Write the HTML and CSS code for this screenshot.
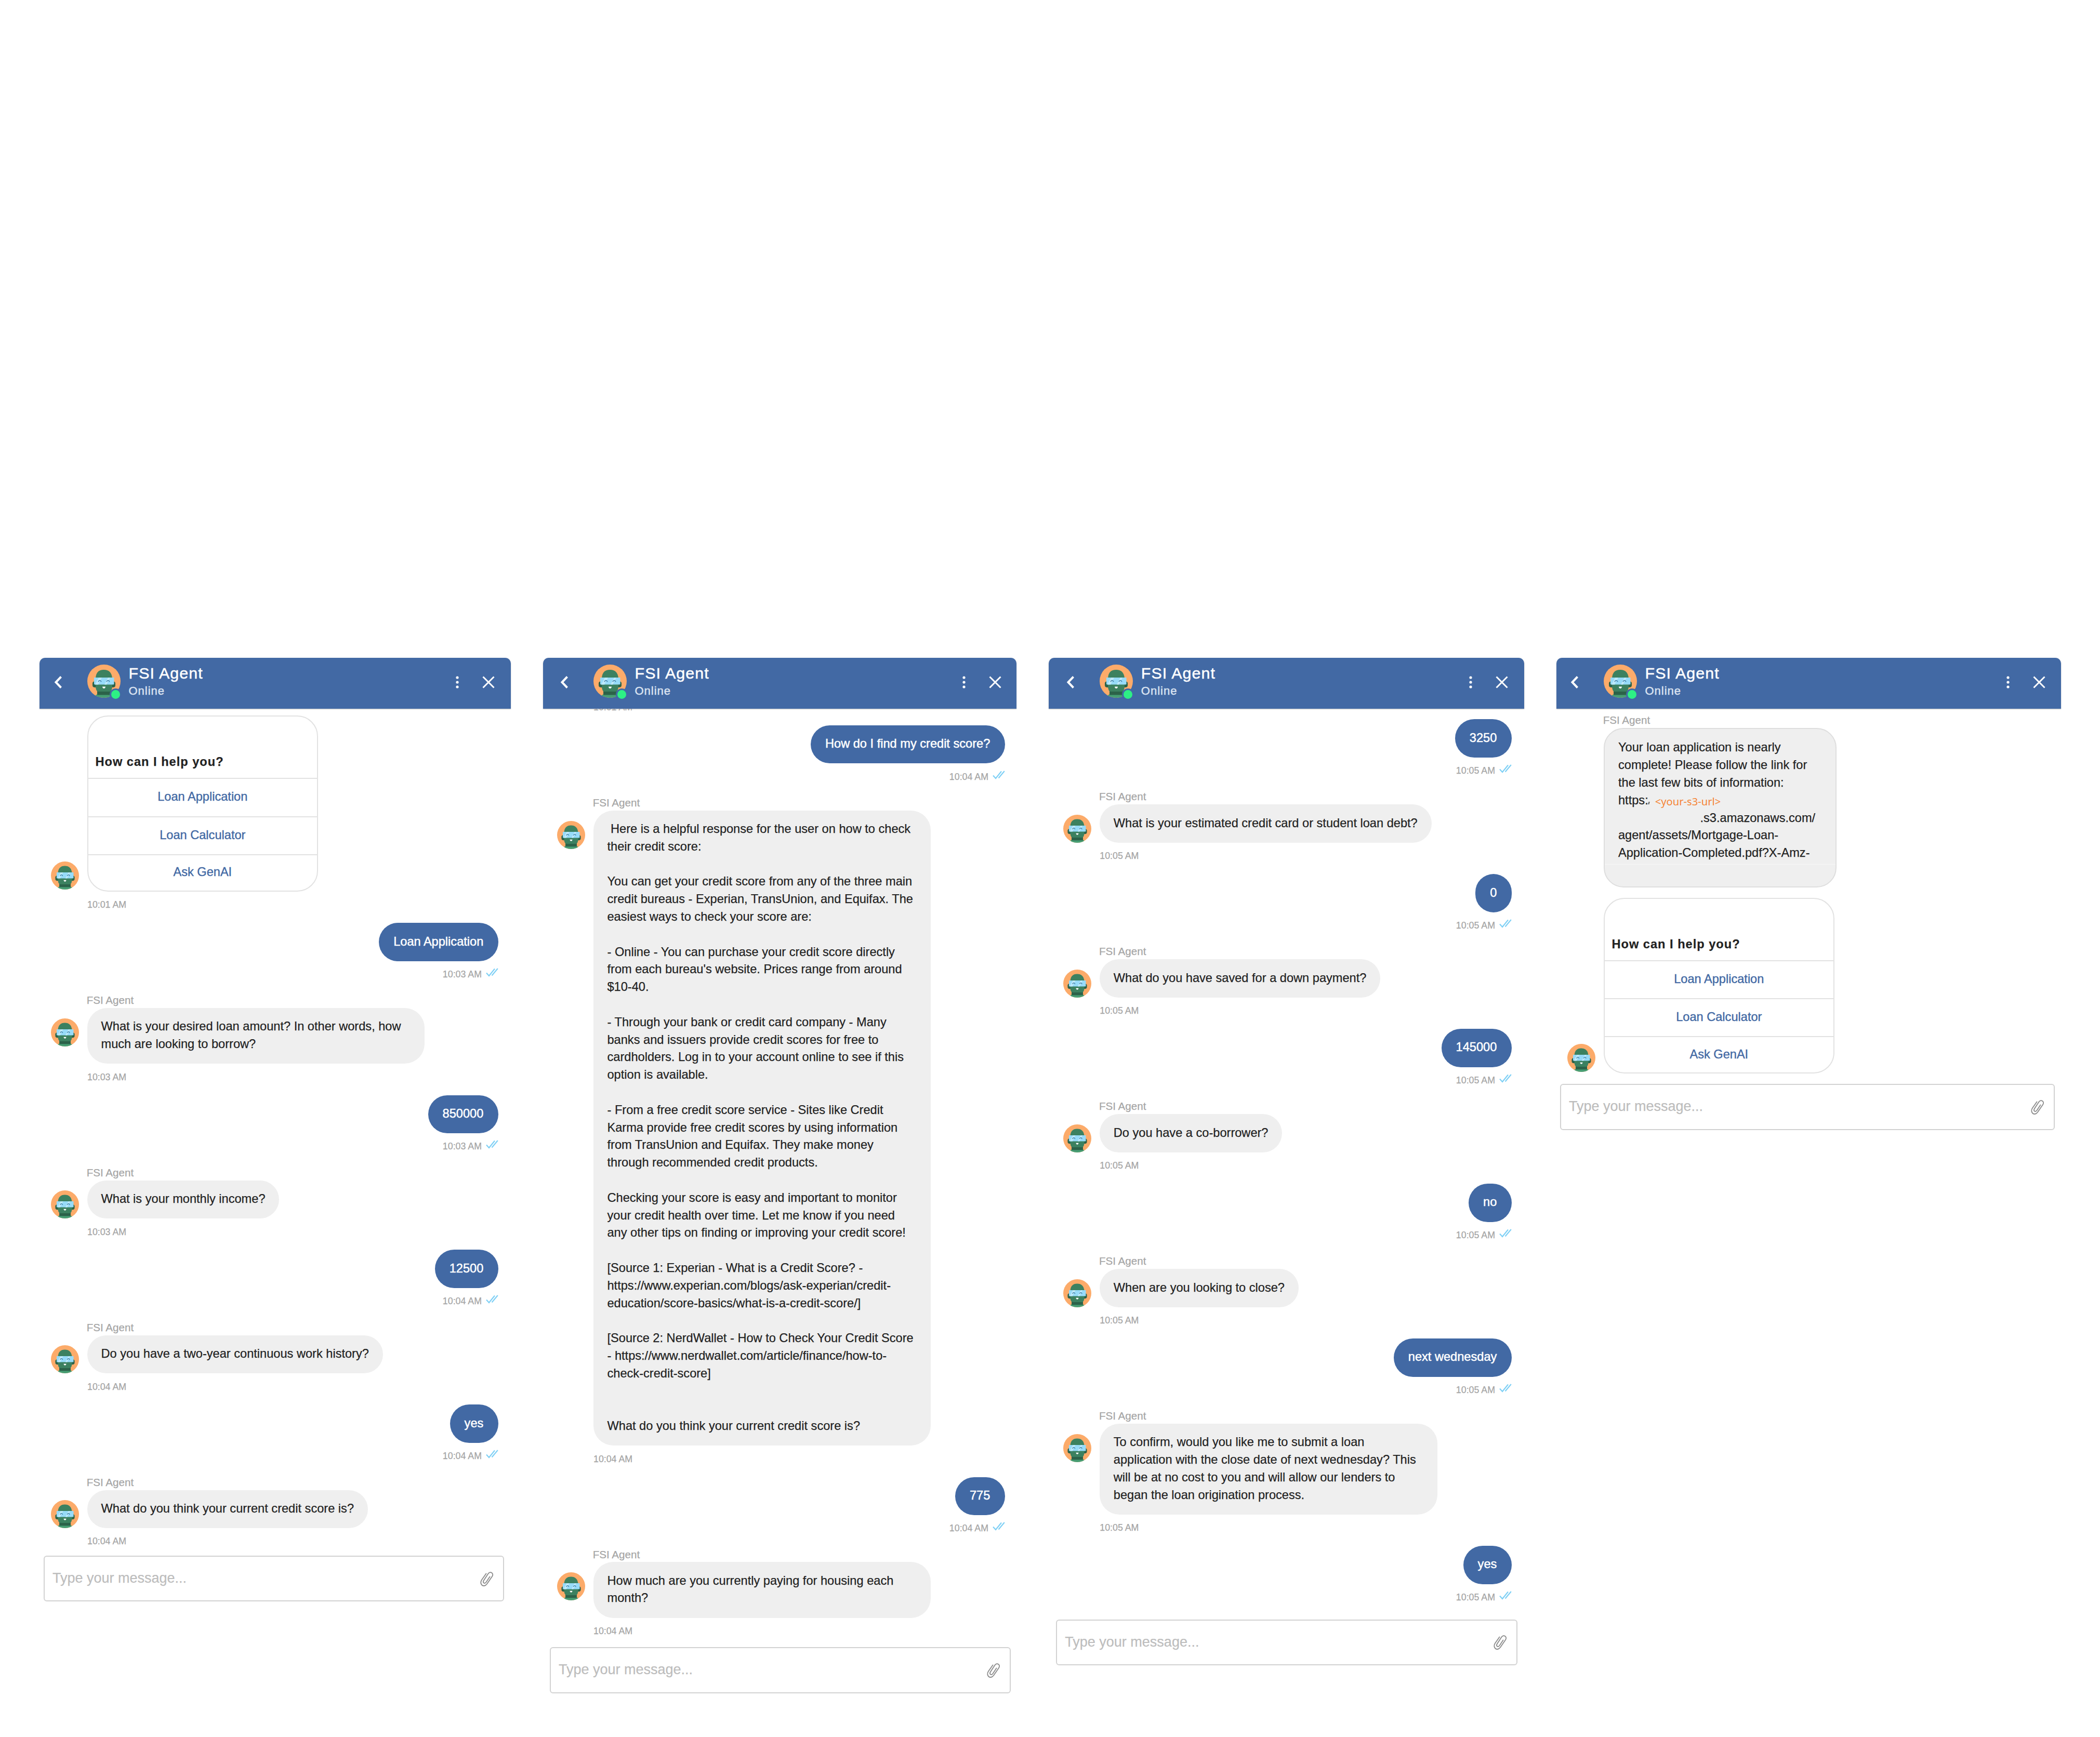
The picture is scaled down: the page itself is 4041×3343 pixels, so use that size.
FILE: index.html
```html
<!DOCTYPE html>
<html lang="en">
<head>
<meta charset="utf-8">
<title>FSI Agent</title>
<link rel="stylesheet" href="styles.css">
</head>
<body>
<svg class="sprite" aria-hidden="true">
  <defs>
    <clipPath id="round"><circle cx="32" cy="32" r="32"/></clipPath>
    <symbol id="avatar" viewBox="0 0 64 64">
      <g clip-path="url(#round)">
        <rect width="64" height="64" fill="#fcab6a"/>
        <path d="M14 64q1-6 6-7h24q5 1 6 7z" fill="#479e74"/>
        <rect x="19" y="48" width="26" height="10.5" fill="#2c6249"/>
        <path d="M10 36q0-3 4-4h36q4 1 4 4v4q0 4-5 4H15q-5 0-5-4z" fill="#2c6249"/>
        <path d="M16 26Q17 10 31.700 10T48 26v17q-1 9-5 9H21q-4 0-5-9z" fill="#3c8160"/>
        <path d="M13 25h38.500v12q0 1.500-1.500 1.500H14.500q-1.500 0-1.500-1.500z" fill="#97dbf9"/>
        <path d="M22 25h6l-7 13.500h-6zM40 25h4l-7 13.500h-4z" fill="#bfe9fb"/>
        <path d="M21 33q3-5 6 0M37 33q3-5 6 0" fill="none" stroke="#3f7fa6" stroke-width="1.500"/>
        <path d="M29 42.500h6q-.5 3.500-3 3.500t-3-3.500z" fill="#fff"/>
      </g>
    </symbol>
    <symbol id="back" viewBox="0 0 16 26"><path d="M13.500 2.500L3.500 13l10 10.500" fill="none" stroke="#fff" stroke-width="4"/></symbol>
    <symbol id="dots" viewBox="0 0 6 24"><circle cx="3" cy="3" r="2.600"/><circle cx="3" cy="12" r="2.600"/><circle cx="3" cy="21" r="2.600"/></symbol>
    <symbol id="close" viewBox="0 0 24 24"><path d="M1.500 1.500l21 21M22.500 1.500l-21 21" fill="none" stroke="#fff" stroke-width="3"/></symbol>
    <symbol id="checks" viewBox="0 0 24 17"><path d="M1 9.500l5 5.500L17 1.500M11.500 14.500L22.800 1" fill="none" stroke="#7fd0f5" stroke-width="2.200"/></symbol>
    <symbol id="clip" viewBox="0 0 28 32"><path d="M12.500 4.500L4 16.500c-5.500 8 3.500 16.500 10 8L24 10c4-6-3.500-11-7.500-5.500L8 17.500c-3 4.500 1.500 7.500 4.500 3.500L19.500 10.500" fill="none" stroke="#8c8c8c" stroke-width="1.900" stroke-linecap="round"/></symbol>
  </defs>
</svg>

<main class="board">

  <section class="panel panel-1">
    <header class="head">
      <svg class="back"><use href="#back"/></svg>
      <div class="face"><svg class="pic"><use href="#avatar"/></svg><i class="online"></i></div>
      <div class="who"><h2 class="name">FSI Agent</h2><p class="status">Online</p></div>
      <svg class="dots"><use href="#dots"/></svg>
      <svg class="close"><use href="#close"/></svg>
    </header>
    <div class="list">
      <div class="msg agent">
        <div class="row"><svg class="avatar"><use href="#avatar"/></svg>
          <div class="card"><h3 class="title">How can I help you?</h3><p class="choice">Loan Application</p><p class="choice">Loan Calculator</p><p class="choice">Ask GenAI</p></div></div>
        <div class="time">10:01 AM</div>
      </div>
      <div class="msg user"><div class="bubble">Loan Application</div><div class="time">10:03 AM<svg class="checks"><use href="#checks"/></svg></div></div>
      <div class="msg agent"><div class="from">FSI Agent</div>
        <div class="row"><svg class="avatar top"><use href="#avatar"/></svg><div class="bubble wide">What is your desired loan amount? In other words, how
much are looking to borrow?</div></div>
        <div class="time">10:03 AM</div></div>
      <div class="msg user"><div class="bubble">850000</div><div class="time">10:03 AM<svg class="checks"><use href="#checks"/></svg></div></div>
      <div class="msg agent"><div class="from">FSI Agent</div>
        <div class="row"><svg class="avatar top"><use href="#avatar"/></svg><div class="bubble">What is your monthly income?</div></div>
        <div class="time">10:03 AM</div></div>
      <div class="msg user"><div class="bubble">12500</div><div class="time">10:04 AM<svg class="checks"><use href="#checks"/></svg></div></div>
      <div class="msg agent"><div class="from">FSI Agent</div>
        <div class="row"><svg class="avatar top"><use href="#avatar"/></svg><div class="bubble">Do you have a two-year continuous work history?</div></div>
        <div class="time">10:04 AM</div></div>
      <div class="msg user"><div class="bubble">yes</div><div class="time">10:04 AM<svg class="checks"><use href="#checks"/></svg></div></div>
      <div class="msg agent"><div class="from">FSI Agent</div>
        <div class="row"><svg class="avatar top"><use href="#avatar"/></svg><div class="bubble">What do you think your current credit score is?</div></div>
        <div class="time">10:04 AM</div></div>
    </div>
    <div class="composer"><span>Type your message...</span><svg class="clip"><use href="#clip"/></svg></div>
  </section>

  <section class="panel panel-2">
    <header class="head">
      <svg class="back"><use href="#back"/></svg>
      <div class="face"><svg class="pic"><use href="#avatar"/></svg><i class="online"></i></div>
      <div class="who"><h2 class="name">FSI Agent</h2><p class="status">Online</p></div>
      <svg class="dots"><use href="#dots"/></svg>
      <svg class="close"><use href="#close"/></svg>
    </header>
    <div class="list">
      <div class="msg agent scrolled"><div class="time">10:01 AM</div></div>
      <div class="msg user"><div class="bubble">How do I find my credit score?</div><div class="time">10:04 AM<svg class="checks"><use href="#checks"/></svg></div></div>
      <div class="msg agent"><div class="from">FSI Agent</div>
        <div class="row"><svg class="avatar top"><use href="#avatar"/></svg><div class="bubble wide"> Here is a helpful response for the user on how to check
their credit score:

You can get your credit score from any of the three main
credit bureaus - Experian, TransUnion, and Equifax. The
easiest ways to check your score are:

- Online - You can purchase your credit score directly
from each bureau's website. Prices range from around
$10-40.

- Through your bank or credit card company - Many
banks and issuers provide credit scores for free to
cardholders. Log in to your account online to see if this
option is available.

- From a free credit score service - Sites like Credit
Karma provide free credit scores by using information
from TransUnion and Equifax. They make money
through recommended credit products.

Checking your score is easy and important to monitor
your credit health over time. Let me know if you need
any other tips on finding or improving your credit score!

[Source 1: Experian - What is a Credit Score? -
https://www.experian.com/blogs/ask-experian/credit-
education/score-basics/what-is-a-credit-score/]

[Source 2: NerdWallet - How to Check Your Credit Score
- https://www.nerdwallet.com/article/finance/how-to-
check-credit-score]


What do you think your current credit score is?</div></div>
        <div class="time">10:04 AM</div></div>
      <div class="msg user"><div class="bubble">775</div><div class="time">10:04 AM<svg class="checks"><use href="#checks"/></svg></div></div>
      <div class="msg agent"><div class="from">FSI Agent</div>
        <div class="row"><svg class="avatar top"><use href="#avatar"/></svg><div class="bubble wide">How much are you currently paying for housing each
month?</div></div>
        <div class="time">10:04 AM</div></div>
    </div>
    <div class="composer"><span>Type your message...</span><svg class="clip"><use href="#clip"/></svg></div>
  </section>

  <section class="panel panel-3">
    <header class="head">
      <svg class="back"><use href="#back"/></svg>
      <div class="face"><svg class="pic"><use href="#avatar"/></svg><i class="online"></i></div>
      <div class="who"><h2 class="name">FSI Agent</h2><p class="status">Online</p></div>
      <svg class="dots"><use href="#dots"/></svg>
      <svg class="close"><use href="#close"/></svg>
    </header>
    <div class="list">
      <div class="msg user"><div class="bubble">3250</div><div class="time">10:05 AM<svg class="checks"><use href="#checks"/></svg></div></div>
      <div class="msg agent"><div class="from">FSI Agent</div>
        <div class="row"><svg class="avatar top"><use href="#avatar"/></svg><div class="bubble">What is your estimated credit card or student loan debt?</div></div>
        <div class="time">10:05 AM</div></div>
      <div class="msg user"><div class="bubble">0</div><div class="time">10:05 AM<svg class="checks"><use href="#checks"/></svg></div></div>
      <div class="msg agent"><div class="from">FSI Agent</div>
        <div class="row"><svg class="avatar top"><use href="#avatar"/></svg><div class="bubble">What do you have saved for a down payment?</div></div>
        <div class="time">10:05 AM</div></div>
      <div class="msg user"><div class="bubble">145000</div><div class="time">10:05 AM<svg class="checks"><use href="#checks"/></svg></div></div>
      <div class="msg agent"><div class="from">FSI Agent</div>
        <div class="row"><svg class="avatar top"><use href="#avatar"/></svg><div class="bubble">Do you have a co-borrower?</div></div>
        <div class="time">10:05 AM</div></div>
      <div class="msg user"><div class="bubble">no</div><div class="time">10:05 AM<svg class="checks"><use href="#checks"/></svg></div></div>
      <div class="msg agent"><div class="from">FSI Agent</div>
        <div class="row"><svg class="avatar top"><use href="#avatar"/></svg><div class="bubble">When are you looking to close?</div></div>
        <div class="time">10:05 AM</div></div>
      <div class="msg user"><div class="bubble">next wednesday</div><div class="time">10:05 AM<svg class="checks"><use href="#checks"/></svg></div></div>
      <div class="msg agent"><div class="from">FSI Agent</div>
        <div class="row"><svg class="avatar top"><use href="#avatar"/></svg><div class="bubble wide">To confirm, would you like me to submit a loan
application with the close date of next wednesday? This
will be at no cost to you and will allow our lenders to
began the loan origination process.</div></div>
        <div class="time">10:05 AM</div></div>
      <div class="msg user"><div class="bubble">yes</div><div class="time">10:05 AM<svg class="checks"><use href="#checks"/></svg></div></div>
    </div>
    <div class="composer"><span>Type your message...</span><svg class="clip"><use href="#clip"/></svg></div>
  </section>

  <section class="panel panel-4">
    <header class="head">
      <svg class="back"><use href="#back"/></svg>
      <div class="face"><svg class="pic"><use href="#avatar"/></svg><i class="online"></i></div>
      <div class="who"><h2 class="name">FSI Agent</h2><p class="status">Online</p></div>
      <svg class="dots"><use href="#dots"/></svg>
      <svg class="close"><use href="#close"/></svg>
    </header>
    <div class="list">
      <div class="msg agent"><div class="from">FSI Agent</div>
        <div class="bubble link"><p>Your loan application is nearly
complete! Please follow the link for
the last few bits of information:</p><p class="url">https:<i class="tick"></i><em class="placeholder">&lt;your-s3-url&gt;</em></p><p class="host">.s3.amazonaws.com/</p><p>agent/assets/Mortgage-Loan-
Application-Completed.pdf?X-Amz-</p><hr class="seam"></div></div>
      <div class="msg agent">
        <div class="row"><svg class="avatar"><use href="#avatar"/></svg>
          <div class="card"><h3 class="title">How can I help you?</h3><p class="choice">Loan Application</p><p class="choice">Loan Calculator</p><p class="choice">Ask GenAI</p></div></div>
      </div>
    </div>
    <div class="composer"><span>Type your message...</span><svg class="clip"><use href="#clip"/></svg></div>
  </section>

</main>
</body>
</html>
```
FILE: styles.css
```css
* { box-sizing: border-box; margin: 0; padding: 0; }

body {
  background: #fff;
  color: #222;
  font: 23.6px/33.8px "Liberation Sans", Arial, sans-serif;
  -webkit-text-stroke: .25px;
}

.sprite { display: block; width: 0; height: 0; }
svg { display: block; flex: none; }

.board {
  display: grid;
  grid-template-columns: 907px 911px 915px 970.5px;
  column-gap: 62px;
  align-items: start;
  padding: 1266px 0 0 76px;
  height: 3343px;
}

/* --l and --r: insets of the conversation inside its window */
.panel { display: flex; flex-direction: column; }
.panel-1 { --l: 92px; --r: 24px; --pad: 13.4px; height: 1816.4px; }
.panel-2 { --l: 97px; --r: 22px; --pad: 0px; height: 1992.7px; }
.panel-3 { --l: 98.3px; --r: 24px; --pad: 20.2px; height: 1939.3px; }
.panel-4 { --l: 91px; --r: 22.5px; --pad: 10.4px; height: 908.6px; }

.head {
  display: flex;
  flex: none;
  height: 98px;
  padding: 13px calc(var(--r) + 7px) 0 calc(var(--l) - 65px);
  background: #4269a4;
  border-radius: 11px 11px 0 0;
  box-shadow: 0 1px 2px rgba(0, 0, 0, .25);
}
.back { width: 16px; height: 26px; margin: 20.5px 48px 0 1px; }
.face { position: relative; width: 64px; height: 64px; }
.pic { width: 64px; height: 64px; }
.online {
  position: absolute;
  left: 43px;
  top: 46px;
  width: 23px;
  height: 23px;
  border: 3px solid #4269a4;
  border-radius: 50%;
  background: #2df085;
}
.who { flex: 1; padding-left: 15.5px; color: #fff; }
.name { margin-top: -1px; font-size: 30.4px; font-weight: 400; line-height: 34px; letter-spacing: 1.1px; -webkit-text-stroke: .5px; }
.status { margin-top: 5px; font-size: 22px; line-height: 26px; letter-spacing: 1px; color: #dae3f1; -webkit-text-stroke: .5px; }
.dots { width: 6px; height: 24px; margin: 21.5px 45px 0 0; fill: #fff; }
.close { width: 24px; height: 24px; margin-top: 21.5px; }

.list {
  flex: 1;
  min-height: 0;
  overflow: hidden;
  padding: var(--pad) var(--r) 0 var(--l);
}
.msg { display: flex; flex-direction: column; align-items: flex-start; }
.msg.agent { margin-bottom: 24.9px; }
.msg.user { align-items: flex-end; margin-bottom: 28.4px; }
.msg.scrolled { margin-top: -28.3px; }

.from { height: 24px; margin: 0 0 2.5px -1.3px; font-size: 20.6px; line-height: 24px; color: #a5a5a5; }
.row { display: flex; align-items: flex-end; margin-left: -70px; }
.avatar { width: 54px; height: 54px; margin: 0 16px 3.5px 0; }
.avatar.top { align-self: flex-start; margin-top: 20px; margin-bottom: 0; }

.bubble {
  padding: 19.4px 26.8px 20.4px 26.5px;
  border-radius: 38px;
  background: #efefef;
  white-space: pre;
}
.bubble.wide { width: 649.3px; }
.user .bubble { padding-left: 28px; padding-right: 28.7px; background: #4269a4; color: #fff; -webkit-text-stroke: .5px; }

.time {
  display: flex;
  height: 20px;
  margin-top: 15.3px;
  font-size: 17.8px;
  line-height: 20px;
  color: #a5a5a5;
}
.checks { width: 24px; height: 17px; margin: -2px 0 0 8px; }

.card {
  width: 443.6px;
  height: 338.6px;
  border: 2px solid #e2e2e2;
  border-radius: 40px;
  overflow: hidden;
}
.title {
  height: 118px;
  padding: 71px 0 0 13.5px;
  font-size: 23.6px;
  font-weight: 700;
  letter-spacing: 1px;
}
.choice {
  height: 73.3px;
  padding-top: 18px;
  border-top: 2px solid #e2e2e2;
  text-align: center;
  color: #4269a4;
  -webkit-text-stroke: .4px;
}
.choice:last-child { padding-top: 16.2px; }

.bubble.link {
  width: 448px;
  height: 307.5px;
  padding: 19.5px 0 0 26px;
  border: 2px solid #dedede;
}
.url { display: flex; }
.tick { width: 2px; height: 5px; margin: 19px 11px 0 0; background: #555; transform: skewX(-14deg); }
.placeholder { height: 33.8px; font: 20.2px/37px "Noto Sans", sans-serif; color: #f58536; -webkit-text-stroke: 0; }
.host { padding-left: 157.5px; }
.seam { height: 1px; margin: 4px 0 0 -26px; border: 0; background: #f8f8f8; }
.panel-4 .msg.agent { margin-bottom: 19.5px; }
.panel-4 .msg.agent:last-child { margin-bottom: 0; }

.composer {
  display: flex;
  flex: none;
  align-items: center;
  justify-content: space-between;
  height: 88.7px;
  margin: 0 calc(var(--r) - 11px) 0 calc(var(--l) - 84.5px);
  padding: 0 17.5px 0 15.5px;
  border: 2px solid #d2d2d2;
  border-radius: 6px;
  font-size: 27px;
  color: #bdbdbd;
}
.clip { width: 28px; height: 32px; margin-top: 3px; }
```
